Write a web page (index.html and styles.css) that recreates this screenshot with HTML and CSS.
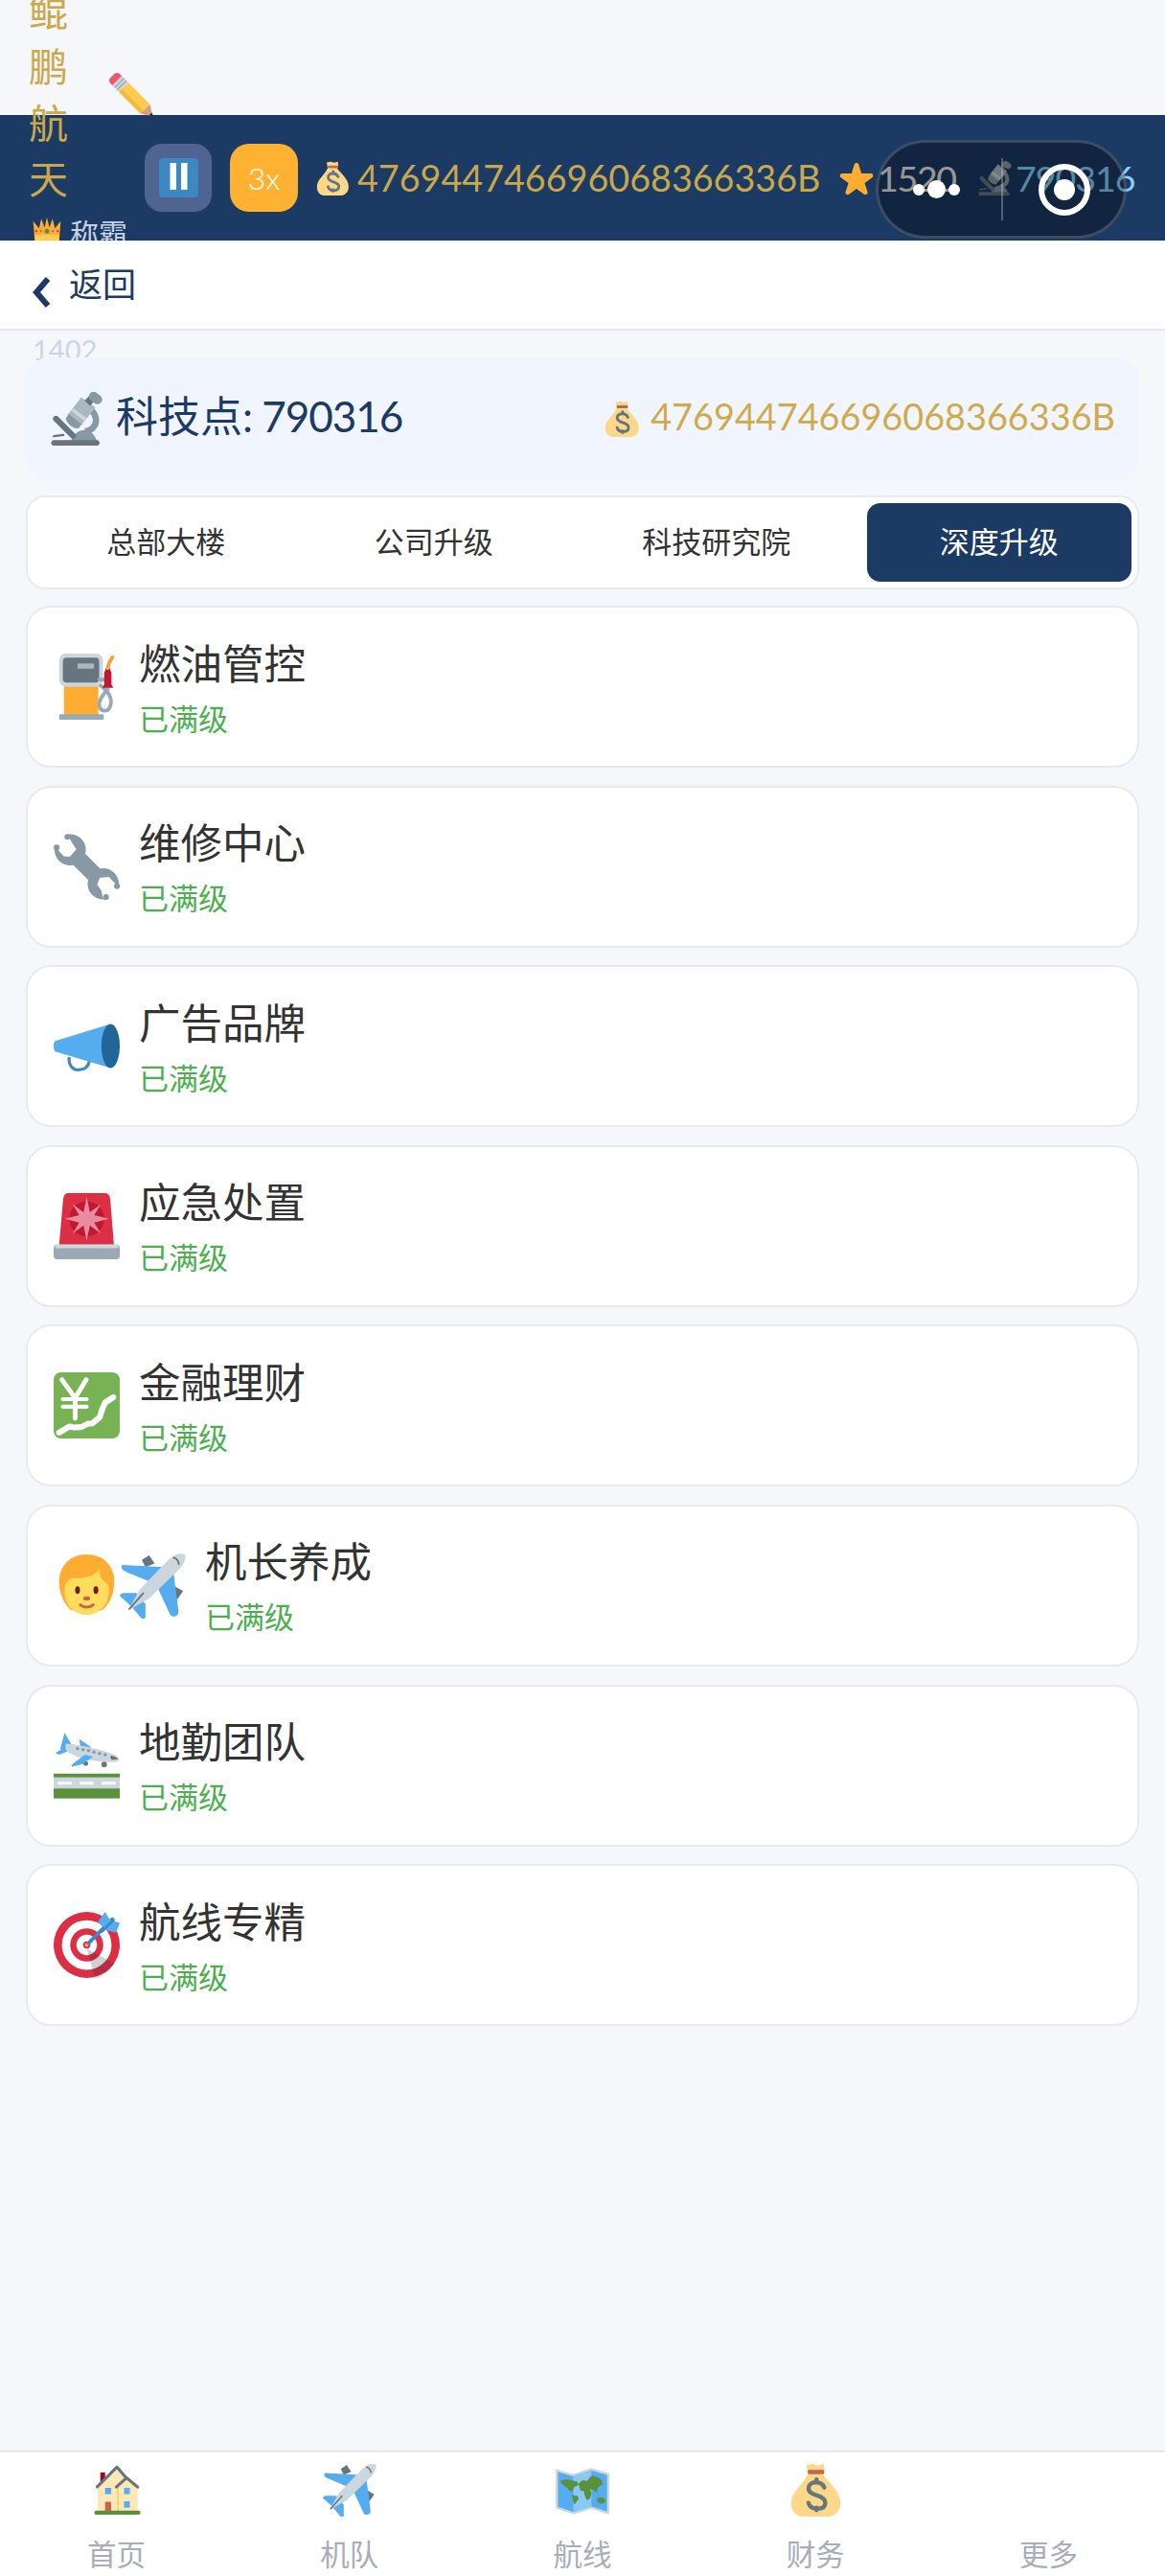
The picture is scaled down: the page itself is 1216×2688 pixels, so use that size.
FILE: index.html
```html
<!DOCTYPE html>
<html lang="zh-CN">
<head>
<meta charset="utf-8">
<title>深度升级</title>
<link rel="stylesheet" href="styles.css">
</head>
<body>
<svg class="defs" xmlns="http://www.w3.org/2000/svg">
  <symbol id="bag" viewBox="0 0 36 36">
    <path fill="#FDD888" d="M12 1.500l4.300-.8 3.500 1 4-1 .2 4.500-1 2.500c2.500 3.500 7 7 10 12.500 2 3.500 2.500 8 1 11-1.500 3-4.500 4.800-7 4.800H10c-3.500 0-6.500-2-7.500-5-1.500-4-.5-8 1.500-11C6 17 11 12 13 7.500z"/>
    <rect x="13" y="4.700" width="11" height="2.800" rx=".8" fill="#BF6952"/>
    <path fill="none" stroke="#67757F" stroke-width="2.800" stroke-linecap="round" d="M24 16.500c-1-2.500-3.500-3.500-5.500-3.500-3 0-5 1.700-5 4 0 3 3 4 5.500 4.800 3 .9 5.700 2 5.700 5s-2.500 4-5.500 4c-2.500 0-5-1.300-5.800-4M18.800 11v2M18.800 30v1.700"/>
  </symbol>
  <symbol id="plane" viewBox="0 0 36 36">
    <path fill="#66757F" d="M12 4 16 1.500 19 6 14 8zM30 18.500l4.500 2.500-3.500 5z"/>
    <path fill="#55ACEE" d="M1.500 6.800 24 8 27 11 19 17 3.500 10.500C.5 9.500.5 7.500 1.500 6.800zM29 9l3 23c.3 3-4 4-5 1L21 20zM.3 24c-.7-1 .5-2 2-2L9 22l5 6v7c0 1.500-2 1.500-3 0l-5-6z"/>
    <path fill="#CCD6DD" d="M35.500 1C33 .2 30 .8 27 3.500L11 20 4.500 31.500 16 25 32.500 9C35.200 6 36.300 3 35.500 1z"/>
    <path fill="none" stroke="#66757F" stroke-width="1" d="M29 2.700c1.800.3 3 1.700 3.300 4M5 31l8-9"/>
  </symbol>
  <symbol id="scope" viewBox="0 0 36 36">
    <path fill="none" stroke="#8899A6" stroke-width="4.200" d="M27.500 12.500c3.500 3.500 3.800 8.500.8 11.500-1.500 1.500-3.500 2.200-5.300 2.500"/>
    <path fill="#8899A6" d="M13.500 33c1-4.500 5-7.500 9.500-7.500 3.500 0 6.500 3 8 7.500z"/>
    <path fill="#66757F" d="M2 32.300h29c1 0 1.700.9 1.700 1.900S32 36 31 36H2c-1 0-1.700-.8-1.700-1.800S1 32.300 2 32.300z"/>
    <path fill="none" stroke="#66757F" stroke-width="4" stroke-linecap="round" d="M3.500 18 15 29.500"/>
    <path fill="none" stroke="#66757F" stroke-width="1.500" stroke-linecap="round" d="M2 29.700l6.500-.8"/>
    <path fill="#8899A6" d="M12 14.500 21 21.500 18.500 24.500c-3.500 0-7-2.500-8.500-6.500z"/>
    <path fill="#AAB8C2" d="M20.500 3.500 30 10.500 21 21.500 12 14.500z"/>
    <path fill="none" stroke="#CCD6DD" stroke-width="2.400" d="M14.500 11.800 23.300 18.700"/>
    <path fill="none" stroke="#66757F" stroke-width="5" d="M24.500 7.500 27.500 4.500"/>
    <path fill="none" stroke="#8899A6" stroke-width="6.400" stroke-linecap="round" d="M28.700 3.100 31.300 5"/>
  </symbol>
</svg>

<div class="top-gap"></div>

<section class="status-bar">
  <div class="profile">
    <div class="name-row">
      <div class="name">鲲鹏航天</div>
      <svg class="pencil" viewBox="0 0 36 36">
        <g transform="translate(3 3) rotate(45)">
          <rect x="0" y="-5" width="8" height="10" rx="3" fill="#EA596E"/>
          <rect x="5" y="-5" width="7" height="10" fill="#CCD6DD"/>
          <path stroke="#99AAB5" stroke-width="1" d="M7.500-5v10M10-5v10"/>
          <rect x="12" y="-5" width="23" height="10" fill="#FFCC4D"/>
          <rect x="12" y="1.700" width="23" height="3.300" fill="#F4B93E"/>
          <path fill="#D99E82" d="M35-5l8 5-8 5z"/>
          <path fill="#292F33" d="M40.500-1.500 44.500 0l-4 1.500z"/>
        </g>
      </svg>
    </div>
    <div class="rank">
      <svg class="crown" viewBox="0 0 36 36">
        <path fill="#FFAC33" d="M3 36 .8 7 8 16 11 4l4 11 3-13 3 13 4-11 3 12 7.200-9L33 36z"/>
        <path fill="#FFCC4D" d="M3 24h30l-.2 12H3z"/>
        <circle cx="18" cy="19.500" r="3" fill="#5C913B"/>
        <circle cx="10.500" cy="19.500" r="1.400" fill="#9266CC"/>
        <circle cx="25.500" cy="19.500" r="1.400" fill="#9266CC"/>
        <circle cx="4.500" cy="19.500" r="1.400" fill="#DD2E44"/>
        <circle cx="31.500" cy="19.500" r="1.400" fill="#DD2E44"/>
      </svg>
      <span>称霸</span>
    </div>
    <div class="level">1402</div>
  </div>

  <div class="pause">
    <svg class="pause-icon" viewBox="0 0 41 41">
      <rect width="41" height="41" rx="4" fill="#3B88C3"/>
      <rect x="11.500" y="5" width="6.500" height="28" fill="#fff"/>
      <rect x="23" y="5" width="6.500" height="28" fill="#fff"/>
    </svg>
  </div>
  <div class="speed">3x</div>

  <svg class="stat-icon bag-first"><use href="#bag"/></svg>
  <span class="money">476944746696068366336B</span>
  <svg class="stat-icon star-icon" viewBox="0 0 36 36">
    <path fill="#FFAC33" d="M27.300 35.300c-.5 0-1-.2-1.400-.5L18 29.100l-7.900 5.700c-.8.600-1.900.6-2.700 0-.8-.6-1.100-1.600-.8-2.600l3-9.300-7.900-5.600c-.8-.6-1.100-1.600-.8-2.600.3-.9 1.200-1.600 2.200-1.600h9.700l3-9.600c.3-1 1.200-1.600 2.200-1.600s1.900.7 2.200 1.600l3 9.600h9.800c1 0 1.900.7 2.200 1.600.3 1-.1 2-.8 2.600l-7.900 5.600 3 9.300c.3 1-.1 2-.8 2.600-.5.300-1 .5-1.500.5z"/>
  </svg>
  <span class="stars">1520</span>
  <svg class="stat-icon scope-icon"><use href="#scope"/></svg>
  <span class="points">790316</span>

  <div class="capsule">
    <div class="dots"><i></i><b></b><i></i></div>
    <span class="capsule-line"></span>
    <svg class="capsule-target" viewBox="0 0 60 60">
      <circle cx="30" cy="30" r="24" fill="none" stroke="#fff" stroke-width="6"/>
      <circle cx="30" cy="30" r="11" fill="#fff"/>
    </svg>
  </div>
</section>

<nav class="back-nav">
  <svg class="chevron" viewBox="0 0 20 32"><path fill="none" stroke="#1B3A64" stroke-width="6" d="M17 2 5 16l12 14"/></svg>
  <span>返回</span>
</nav>

<main class="content">
  <section class="tech-card">
    <div class="tech-left">
      <svg class="tech-icon"><use href="#scope"/></svg>
      <span>科技点<em class="tech-num">: 790316</em></span>
    </div>
    <div class="tech-right">
      <svg class="tech-bag"><use href="#bag"/></svg>
      <span>476944746696068366336B</span>
    </div>
  </section>

  <div class="tabs">
    <div class="tab">总部大楼</div>
    <div class="tab">公司升级</div>
    <div class="tab">科技研究院</div>
    <div class="tab active">深度升级</div>
  </div>

  <div class="upgrades">
    <article class="upgrade">
      <div class="icons">
        <svg class="emoji" viewBox="0 0 36 36">
          <rect x="5.600" y="17" width="18.700" height="16.500" fill="#FFAC33"/>
          <rect x="3" y="33" width="24.300" height="3" rx=".6" fill="#99AAB5"/>
          <rect x="3" y="0" width="23.800" height="18" rx="3.500" fill="#CCD6DD"/>
          <rect x="5" y="2.200" width="19.800" height="13.600" rx="2" fill="#66757F"/>
          <rect x="13" y="5.400" width="9" height="2.800" fill="#AAB8C2"/>
          <path fill="none" stroke="#99AAB5" stroke-width="2" d="M25 17c5 4 7 7 6 11s-5 4-6 1c-1-3 2-7 5-10"/>
          <rect x="24" y="13.200" width="4" height="2" fill="#99AAB5"/>
          <path fill="#BE1931" d="M28.500 8h2l1 2.500V17l1 1.700h-6l1-1.700v-6.500z"/>
          <path fill="none" stroke="#F4A33D" stroke-width="2" stroke-linecap="round" d="M29.500 8c0-2 1-3.500 2.500-6"/>
        </svg>
      </div>
      <div class="info"><h3>燃油管控</h3><p>已满级</p></div>
    </article>

    <article class="upgrade">
      <div class="icons">
        <svg class="emoji" viewBox="0 0 36 36">
          <circle cx="9" cy="8.700" r="8.500" fill="#8899A6"/>
          <circle cx="27" cy="27.300" r="8.500" fill="#8899A6"/>
          <path stroke="#8899A6" stroke-width="9" d="M9 9l18 18"/>
          <path fill="#fff" d="M6.800 -1.500-1.500-1.500v8.300L2 8.500l3.500 3.800 3.300.2 3.500-4-2.800-4.500zM36.500 29.500v7h-8l-1.800-1.700-.7-3.800-2.300-3.300 1.400-3.700 5-.5 3.500 3.700z"/>
          <circle cx="7.500" cy="1.700" r="1.600" fill="#8899A6"/>
          <circle cx="1.600" cy="7.500" r="1.600" fill="#8899A6"/>
          <circle cx="34.500" cy="28.500" r="1.600" fill="#8899A6"/>
          <circle cx="28.500" cy="34.500" r="1.600" fill="#8899A6"/>
        </svg>
      </div>
      <div class="info"><h3>维修中心</h3><p>已满级</p></div>
    </article>

    <article class="upgrade">
      <div class="icons">
        <svg class="emoji" viewBox="0 0 36 36">
          <path fill="none" stroke="#4289C1" stroke-width="1.700" d="M8.500 24c-.5 4 1.500 7 5 7s5.500-2 6-5"/>
          <path fill="#55ACEE" d="M1.700 15 31 6v24L1.700 21.300C.5 21 0 20 0 18s.5-2.700 1.700-3z"/>
          <ellipse cx="31" cy="18" rx="5" ry="12" fill="#226699"/>
        </svg>
      </div>
      <div class="info"><h3>广告品牌</h3><p>已满级</p></div>
    </article>

    <article class="upgrade">
      <div class="icons">
        <svg class="emoji" viewBox="0 0 36 36">
          <path fill="#DD2E44" d="M8 0h20c1.500 0 2.500 1 2.800 3l2 25H3l2.200-25C5.500 1 6.500 0 8 0z"/>
          <circle cx="18" cy="14" r="9.500" fill="#BE1931"/>
          <path fill="#EA8C9F" d="M18 2l1.700 8.400 6-4.400-3.600 6L30 14l-7.900 2 3.600 6-6-4.400L18 26l-1.700-8.400-6 4.400 3.600-6L6 14l7.900-2-3.600-6 6 4.400z"/>
          <rect x="0" y="28" width="36" height="8" rx="1.800" fill="#99AAB5"/>
          <rect x="0.800" y="28" width="34.400" height="2" fill="#CCD6DD"/>
        </svg>
      </div>
      <div class="info"><h3>应急处置</h3><p>已满级</p></div>
    </article>

    <article class="upgrade">
      <div class="icons">
        <svg class="emoji" viewBox="0 0 36 36">
          <rect width="36" height="36" rx="4" fill="#77B255"/>
          <path fill="none" stroke="#fff" stroke-width="2.600" stroke-linecap="round" d="M4.500 4 11.700 14l6-10M11.700 14v11"/>
          <path fill="none" stroke="#fff" stroke-width="2.200" stroke-linecap="round" d="M5 14.600h13M5 18.700h13"/>
          <path fill="none" stroke="#fff" stroke-width="3.200" stroke-linecap="round" stroke-linejoin="round" d="M3 32.800 8.500 29.500 11 30 15 29.800 18.500 28 21 27.800 25 24.500 26.500 20 28 16.500 32.500 13.500"/>
        </svg>
      </div>
      <div class="info"><h3>金融理财</h3><p>已满级</p></div>
    </article>

    <article class="upgrade">
      <div class="icons">
        <svg class="emoji" viewBox="0 0 36 36">
          <path fill="#FFAC33" d="M18 1c9 0 15 6 15 15 0 7-3 12-6 15l-9 3-9-3c-3-3-6-8-6-15C3 7 9 1 18 1z"/>
          <path fill="#FFDC5D" d="M6 20c0-3 2-6 5-6 6 0 11-1 14-5 0 4 1 6 3 7 1 1 2 2 2 4v2c0 7-6 12-12 12S6 29 6 22z"/>
          <ellipse cx="13" cy="20.500" rx="1.300" ry="2.100" fill="#662113"/>
          <ellipse cx="23" cy="20.500" rx="1.300" ry="2.100" fill="#662113"/>
          <ellipse cx="18" cy="25" rx="1.900" ry="1.100" fill="#C1694F"/>
          <path fill="none" stroke="#C1694F" stroke-width="1.600" stroke-linecap="round" d="M14.500 28.500c2 1.700 5 1.700 7 0"/>
        </svg>
        <svg class="emoji"><use href="#plane"/></svg>
      </div>
      <div class="info"><h3>机长养成</h3><p>已满级</p></div>
    </article>

    <article class="upgrade">
      <div class="icons">
        <svg class="emoji" viewBox="0 0 36 36">
          <path fill="#55ACEE" d="M14 3.500 20.500 8l-3 1.500-3-2zM6 0l4 7-4 3-2.500-1zM1 11l6-3.500 2 2-6 2.500z"/>
          <path fill="#CCD6DD" d="M7 6c10 1 20 3.500 26 6 2 1 3 2 2.500 3-.5 1-2 1-4 1-9 0-18-2-23-5C6 9.500 6 7 7 6z"/>
          <circle cx="13" cy="8.700" r=".9" fill="#8899A6"/><circle cx="16" cy="9.200" r=".9" fill="#8899A6"/>
          <circle cx="19" cy="9.800" r=".9" fill="#8899A6"/><circle cx="22" cy="10.500" r=".9" fill="#8899A6"/>
          <circle cx="25" cy="11.300" r=".9" fill="#8899A6"/><circle cx="28" cy="12" r=".9" fill="#8899A6"/>
          <path fill="#66757F" d="M31.500 12.500c2 .4 3.500 1.300 3.500 2l-3 .3c-1 0-1.500-2.500-.5-2.300z"/>
          <circle cx="17.500" cy="16.800" r="1.300" fill="#66757F"/><circle cx="27.500" cy="17.300" r="1.500" fill="#66757F"/>
          <path fill="#55ACEE" d="M17 12l4.500 1.200-6 4-5.500 1.300c-.5-.5 0-1 .5-1.500z"/>
          <rect y="22.300" width="36" height="13.500" fill="#5C913B"/>
          <rect y="24.300" width="36" height="6.100" fill="#CCD6DD"/>
          <rect x="2" y="26.600" width="8" height="1.700" rx=".8" fill="#F5F8FA"/>
          <rect x="14" y="26.600" width="8" height="1.700" rx=".8" fill="#F5F8FA"/>
          <rect x="26" y="26.600" width="8" height="1.700" rx=".8" fill="#F5F8FA"/>
        </svg>
      </div>
      <div class="info"><h3>地勤团队</h3><p>已满级</p></div>
    </article>

    <article class="upgrade">
      <div class="icons">
        <svg class="emoji" viewBox="0 0 36 36">
          <circle cx="18" cy="18" r="18" fill="#DD2E44"/>
          <circle cx="18" cy="18" r="13.500" fill="#fff"/>
          <circle cx="18" cy="18" r="9" fill="#DD2E44"/>
          <circle cx="18" cy="18" r="5.600" fill="#fff"/>
          <circle cx="18" cy="18" r="2" fill="#DD2E44"/>
          <path fill="#292F33" fill-opacity=".22" d="M18 20 22.500 36c3.500-.5 8-3.500 10.500-8z"/>
          <circle cx="18" cy="18" r="1" fill="#FFAC33"/>
          <path fill="none" stroke="#3B88C3" stroke-width="2" stroke-linecap="round" d="M19 17 32 4"/>
          <path fill="#55ACEE" d="M24 5.500 28 0l2.600 4.300L36 6l-2 5.300-5 -1.300z"/>
          <path fill="none" stroke="#3B88C3" stroke-width="1.500" d="M26 11 33 4"/>
        </svg>
      </div>
      <div class="info"><h3>航线专精</h3><p>已满级</p></div>
    </article>
  </div>
</main>

<footer class="tabbar">
  <a class="tabbar-item">
    <svg class="tabbar-icon" viewBox="0 0 36 36">
      <rect x="6.900" y="6.400" width="3.200" height="7" fill="#A0041E"/>
      <path fill="#FFE8B6" d="M5.200 16 18 3l6.500 7.500L32 16v16H5.200z"/>
      <rect x="18.300" y="16" width=".9" height="16" fill="#FFCC4D"/>
      <path fill="none" stroke="#66757F" stroke-width="2" stroke-linecap="round" stroke-linejoin="round" d="M4.800 16 18 2.800 24.500 10.300M17.600 16.200 24.500 10 32 16.200"/>
      <rect x="10.100" y="16.700" width="4.100" height="4.300" fill="#55ACEE"/>
      <rect x="22.800" y="16.700" width="3.900" height="4.300" fill="#55ACEE"/>
      <rect x="22.800" y="25.700" width="3.900" height="4.300" fill="#55ACEE"/>
      <rect x="10.100" y="26.100" width="4.100" height="6" fill="#C1694F"/>
      <rect x="3" y="32" width="30.700" height="2.700" rx="1" fill="#5C913B"/>
    </svg>
    <span>首页</span>
  </a>
  <a class="tabbar-item"><svg class="tabbar-icon"><use href="#plane"/></svg><span>机队</span></a>
  <a class="tabbar-item">
    <svg class="tabbar-icon" viewBox="0 0 36 36">
      <path fill="#55ACEE" stroke="#CCD6DD" stroke-width="1.500" stroke-linejoin="round" d="M.8 5 11.800 8.200 24 4.300l11.200 3.200v26.100L24 30l-12.200 3.600L.8 30z"/>
      <path fill="#88C9F9" d="M11.800 9 24 5.100v24.300l-12.200 3.500z"/>
      <path fill="#5C913B" d="M3 12l4-1 3 .5 4.500 1 .5 2.500-2.500 1-1.500 3.500-2-1-2-2.500-3-2zM11 21.500l3.500.5 1 2-1.500 2-1.500 2-1-3zM15 14l3-2.500 3 .5 3-3.500 4 1 3 2 .5 3-3 1.500-1 4-2.500-2-2-.5 1 3-1 3.500-2 1-1.500-3-.5-3-2.500-.5-.5-2.500zM28 23.500l3.500-.5 1.800 1.800-.5 2-3 .5-2-1.500z"/>
    </svg>
    <span>航线</span>
  </a>
  <a class="tabbar-item"><svg class="tabbar-icon"><use href="#bag"/></svg><span>财务</span></a>
  <a class="tabbar-item"><span class="tabbar-blank"></span><span>更多</span></a>
</footer>
</body>
</html>
```

FILE: styles.css
```css
* {
  box-sizing: border-box;
}

html,
body {
  margin: 0;
  padding: 0;
}

body {
  width: 1216px;
  height: 2688px;
  display: flex;
  flex-direction: column;
  overflow: hidden;
  background: #f5f7fb;
  font-family: Lato, "Noto Sans CJK SC", sans-serif;
  color: #333;
}

.defs {
  display: none;
}

.top-gap {
  height: 120px;
  flex: none;
}

.status-bar {
  position: relative;
  flex: none;
  height: 131px;
  display: flex;
  align-items: center;
  padding-left: 30px;
  background: #1b3a64;
  white-space: nowrap;
}

.profile {
  flex: none;
  width: 121px;
  height: 398px;
  display: flex;
  flex-direction: column;
}

.name-row {
  display: flex;
  align-items: flex-start;
  height: 236px;
}

.name {
  width: 41px;
  margin-top: -4px;
  font-size: 41px;
  line-height: 58.500px;
  white-space: normal;
  color: #cba94a;
}

.pencil {
  flex: none;
  width: 50px;
  height: 50px;
  margin: 88px 0 0 42px;
}

.rank {
  height: 122px;
  display: flex;
  align-items: flex-start;
  gap: 9px;
  padding: 2px 0 0 4px;
  font-size: 30px;
  line-height: 36px;
  color: #c5d3e6;
}

.crown {
  width: 30px;
  height: 30px;
  flex: none;
}

.level {
  height: 40px;
  padding-left: 4px;
  font-size: 29px;
  line-height: 40px;
  color: #c9d6e8;
}

.pause {
  flex: none;
  width: 70px;
  height: 71px;
  display: flex;
  align-items: center;
  justify-content: center;
  border-radius: 18px;
  background: #4f6490;
}

.pause-icon {
  width: 41px;
  height: 41px;
}

.speed {
  flex: none;
  width: 71px;
  height: 71px;
  margin-left: 19px;
  border-radius: 20px;
  background: #ffb232;
  color: #fff;
  font-size: 32px;
  font-weight: 300;
  line-height: 71px;
  text-align: center;
}

.stat-icon {
  flex: none;
  width: 36px;
  height: 36px;
}

.bag-first {
  margin-left: 18px;
}

.money {
  flex: none;
  width: 484px;
  margin-left: 8px;
  font-size: 37.700px;
  color: #c9a84c;
}

.star-icon {
  margin-left: 19px;
}

.stars {
  flex: none;
  width: 79px;
  margin-left: 4px;
  font-size: 37.500px;
  letter-spacing: -1.300px;
  color: #e8e8e8;
}

.scope-icon {
  margin-left: 26px;
}

.points {
  flex: none;
  margin-left: 3px;
  font-size: 37.500px;
  letter-spacing: -1px;
  color: #87cefa;
}

.capsule {
  position: absolute;
  left: 914px;
  top: 26px;
  width: 262px;
  height: 103px;
  display: flex;
  align-items: center;
  border: 3px solid rgba(255, 255, 255, 0.18);
  border-radius: 52px;
  background: rgba(0, 0, 0, 0.35);
}

.dots {
  display: flex;
  align-items: center;
  gap: 2px;
  margin-left: 36px;
  width: 92px;
}

.dots i {
  width: 12px;
  height: 12px;
  border-radius: 50%;
  background: #fff;
}

.dots b {
  width: 19px;
  height: 19px;
  margin: 0 1px;
  border-radius: 50%;
  background: #fff;
}

.capsule-line {
  width: 2px;
  height: 65px;
  background: rgba(255, 255, 255, 0.28);
}

.capsule-target {
  width: 60px;
  height: 60px;
  margin-left: 34px;
}

.back-nav {
  position: relative;
  z-index: 2;
  flex: none;
  height: 94px;
  display: flex;
  align-items: center;
  gap: 19px;
  padding: 0 0 0 33px;
  background: #fff;
  border-bottom: 2px solid #e5e7ee;
  color: #1b3a64;
  font-size: 35px;
}

.back-nav span {
  margin-bottom: 5px;
}

.chevron {
  width: 20px;
  height: 32px;
  margin-top: 16px;
}

.content {
  flex: 1;
  min-height: 0;
  padding: 28px 27px 0;
}

.tech-card {
  position: relative;
  z-index: 2;
  height: 127px;
  display: flex;
  align-items: center;
  justify-content: space-between;
  padding: 0 25px 0 26px;
  border-radius: 24px;
  background: #f0f5ff;
}

.tech-left {
  display: flex;
  align-items: center;
  gap: 12px;
  color: #1b3a64;
  font-size: 44px;
}

.tech-left span {
  margin-bottom: 10px;
}

.tech-num {
  font-style: normal;
  letter-spacing: -1px;
}

.tech-icon {
  width: 56px;
  height: 56px;
}

.tech-right {
  display: flex;
  align-items: center;
  gap: 11px;
  color: #cfab4d;
  font-size: 37.800px;
}

.tech-right span {
  margin-bottom: 5px;
}

.tech-bag {
  width: 38px;
  height: 38px;
}

.tabs {
  margin-top: 17px;
  height: 98px;
  display: flex;
  gap: 3px;
  padding: 6px;
  border: 2px solid #e8eaf0;
  border-radius: 20px;
  background: #fff;
}

.tab {
  flex: 1 1 auto;
  display: flex;
  align-items: center;
  justify-content: center;
  padding: 0 76px 5px;
  border-radius: 14px;
  font-size: 31px;
  color: #333;
}

.tab.active {
  background: #1b3a64;
  color: #fff;
}

.upgrades {
  margin-top: 17px;
  display: flex;
  flex-direction: column;
  gap: 18.600px;
}

.upgrade {
  height: 169px;
  display: flex;
  align-items: center;
  gap: 20px;
  padding: 0 27px;
  border: 2px solid #e8eaf0;
  border-radius: 26px;
  background: #fff;
}

.icons {
  display: flex;
  flex: none;
}

.emoji {
  display: block;
  width: 69px;
  height: 69px;
}

.info h3 {
  margin: 0 0 10px;
  font-size: 43.500px;
  font-weight: 400;
  line-height: 56px;
  color: #333;
}

.info p {
  margin: 0;
  font-size: 31px;
  line-height: 40px;
  color: #4caf50;
}

.tabbar {
  flex: none;
  height: 131px;
  display: grid;
  grid-template-columns: repeat(5, 1fr);
  background: #fff;
  border-top: 2px solid #e5e7ee;
  padding-top: 11px;
}

.tabbar-item {
  display: flex;
  flex-direction: column;
  align-items: center;
  font-size: 30.500px;
  line-height: 40px;
  color: #a8adba;
}

.tabbar-icon,
.tabbar-blank {
  display: block;
  width: 56px;
  height: 56px;
  margin-bottom: 19px;
}
```
